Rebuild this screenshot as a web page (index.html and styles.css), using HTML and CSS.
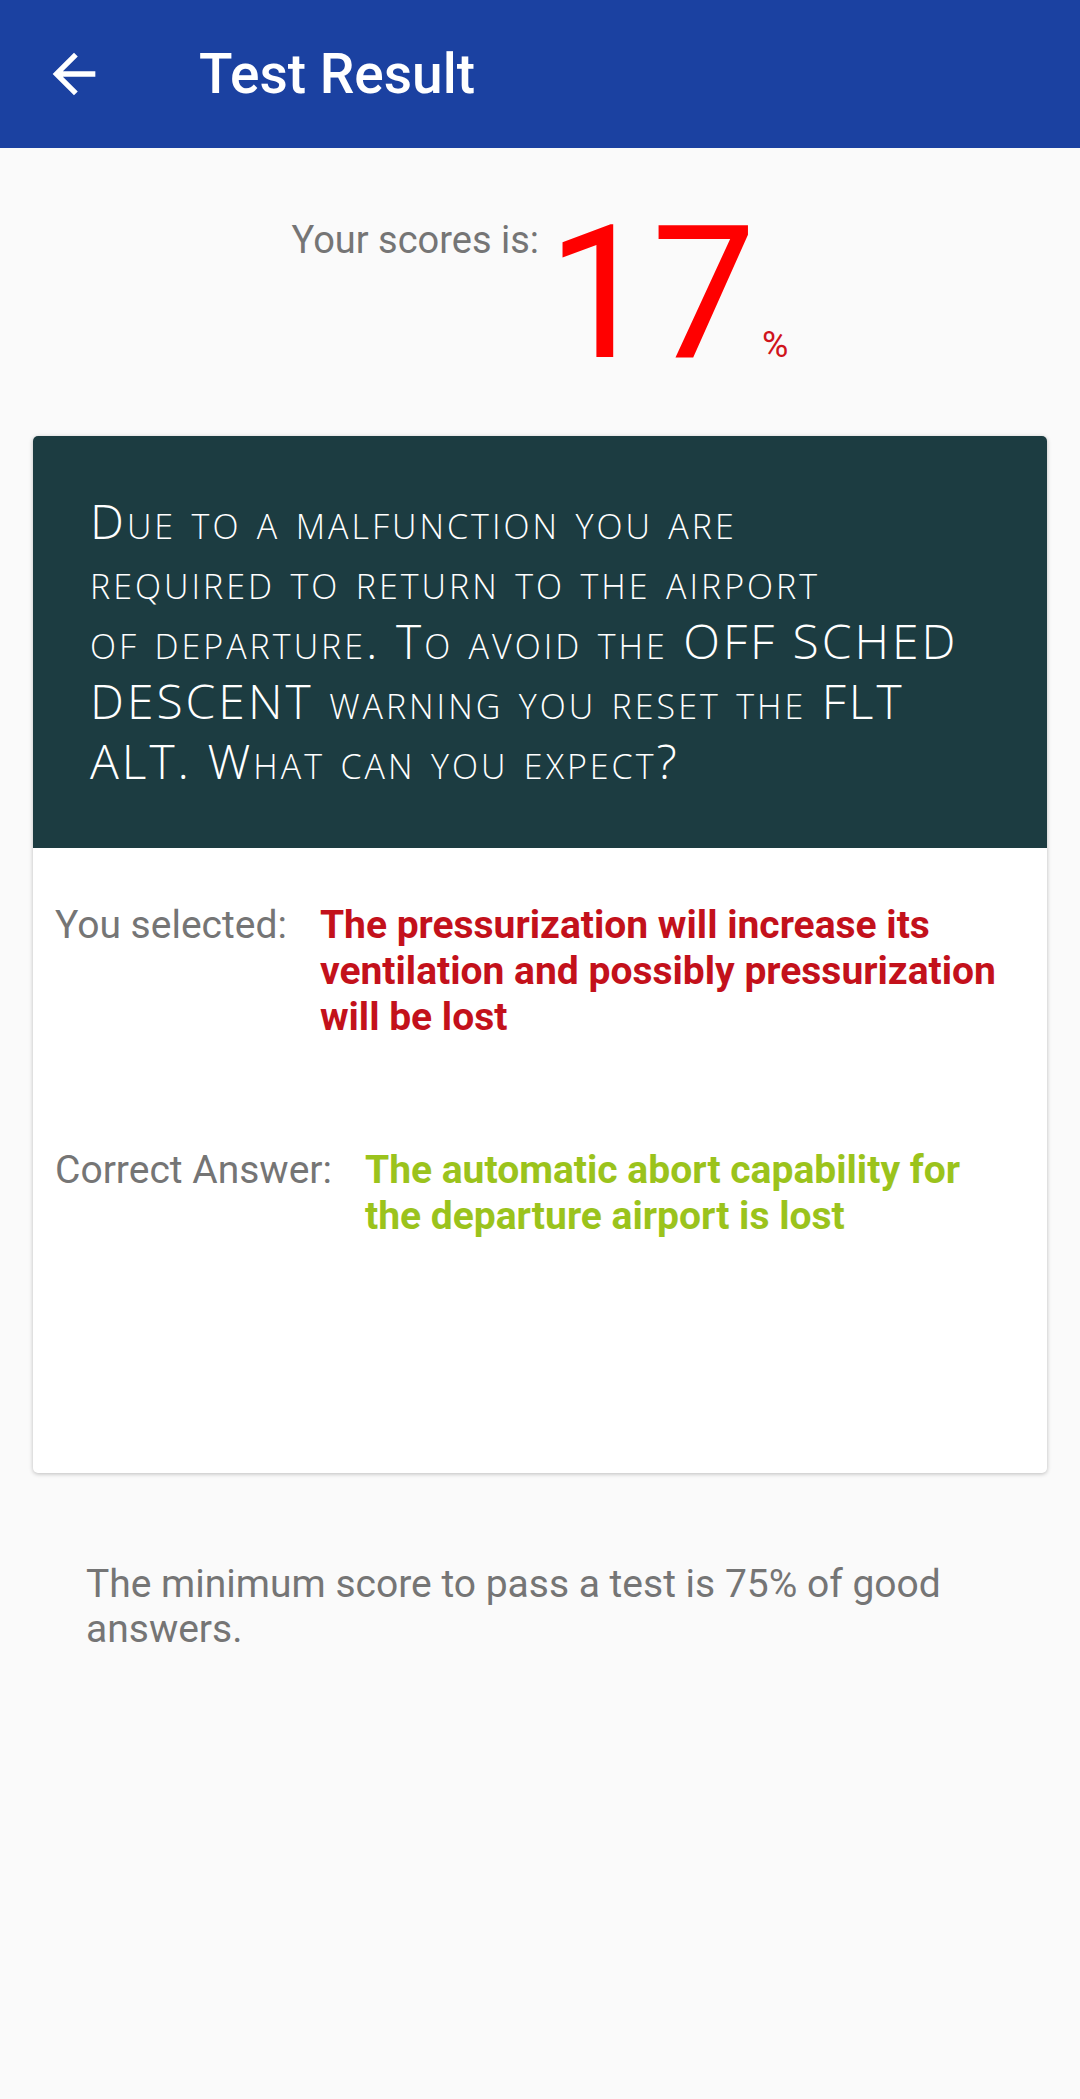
FILE: index.html
```html
<!DOCTYPE HTML><html>
<head>
  <title>Test Result</title>
  <meta name="viewport" content="width=device-width, initial-scale=1">
  <meta charset="UTF-8">
  <link rel="stylesheet" href="styles.css">
</head>
<body>
  <div class="toolbar">
    <svg class="back" viewBox="0 0 24 24"><path d="M20 11H7.83l5.59-5.59L12 4l-8 8 8 8 1.41-1.41L7.83 13H20v-2z"/></svg>
    <h1 class="title">Test Result</h1>
  </div>

  <div class="score">
    <span class="score-label">Your scores is:</span>
    <span class="score-value">17</span>
    <span class="score-unit">%</span>
  </div>

  <div class="card">
    <div class="question">Due to a malfunction you are<br>required to return to the airport<br>of departure. To avoid the OFF SCHED<br>DESCENT warning you reset the FLT<br>ALT. What can you expect?</div>
    <div class="answers">
      <div class="row">
        <span class="label">You selected:</span>
        <span class="answer answer-wrong">The pressurization will increase its ventilation and possibly pressurization will be lost</span>
      </div>
      <div class="row row-correct">
        <span class="label">Correct Answer:</span>
        <span class="answer answer-right">The automatic abort capability for the departure airport is lost</span>
      </div>
    </div>
  </div>

  <p class="note">The minimum score to pass a test is 75% of good answers.</p>
</body>
</html>
```

FILE: styles.css
```css
html {font-family: Roboto, "Liberation Sans", sans-serif;}
body {margin: 0; background-color: #fafafa; color: #757575;}

.toolbar {
	display: flex;
	align-items: center;
	height: 148px;
	background-color: #1b41a1;
	color: #fff;
}
.back {width: 64px; height: 64px; margin-left: 42px; fill: #fff;}
.title {margin: 0 0 0 93px; font-size: 55px; font-weight: 500;}

.score {
	display: flex;
	justify-content: center;
	align-items: baseline;
	padding-top: 51px;
}
.score-label {align-self: flex-start; margin-top: 22px; margin-right: 8px; font-size: 38px; line-height: 1;}
.score-value {font-size: 186px; line-height: 188px; color: #ff0000;}
.score-unit {margin-left: 6px; font-size: 36px; color: #d0141c;}

.card {
	margin: 49px 33px 0;
	background-color: #fff;
	border-radius: 5px;
	box-shadow: 0 1px 4px rgba(0, 0, 0, 0.25);
	overflow: hidden;
}

.question {
	padding: 55px 20px 57px 57px;
	background-color: #1c3c41;
	color: #fff;
	font-family: "Open Sans", sans-serif;
	font-weight: 300;
	font-variant: small-caps;
	font-size: 48px;
	line-height: 60px;
	letter-spacing: 3px;
	white-space: nowrap;
}

.answers {padding: 54px 36px 234px 22px;}
.row {display: flex; align-items: baseline; gap: 33px;}
.row-correct {margin-top: 107px;}
.label {flex: none; font-size: 39px; line-height: 46px;}
.answer {font-size: 39px; line-height: 46px; font-weight: 700;}
.answer-wrong {color: #c3111b;}
.answer-right {color: #9bc31c;}

.note {
	margin: 89px 86px 0;
	font-size: 39px;
	line-height: 45px;
}
```
